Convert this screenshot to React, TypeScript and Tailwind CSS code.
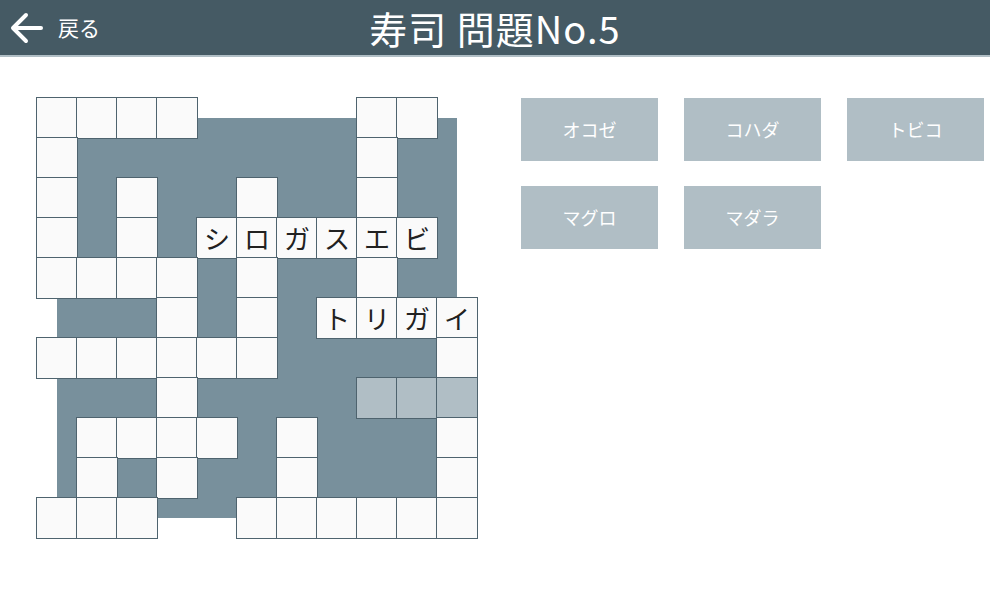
import React from 'react';

// 11x11 board: '.' = block, 'w' = empty square, 'h' = highlighted square, other = placed kana
const board: string[][] = [
  ['w', 'w', 'w', 'w', '.', '.', '.', '.', 'w', 'w', '.'],
  ['w', '.', '.', '.', '.', '.', '.', '.', 'w', '.', '.'],
  ['w', '.', 'w', '.', '.', 'w', '.', '.', 'w', '.', '.'],
  ['w', '.', 'w', '.', 'シ', 'ロ', 'ガ', 'ス', 'エ', 'ビ', '.'],
  ['w', 'w', 'w', 'w', '.', 'w', '.', '.', 'w', '.', '.'],
  ['.', '.', '.', 'w', '.', 'w', '.', 'ト', 'リ', 'ガ', 'イ'],
  ['w', 'w', 'w', 'w', 'w', 'w', '.', '.', '.', '.', 'w'],
  ['.', '.', '.', 'w', '.', '.', '.', '.', 'h', 'h', 'h'],
  ['.', 'w', 'w', 'w', 'w', '.', 'w', '.', '.', '.', 'w'],
  ['.', 'w', '.', 'w', '.', '.', 'w', '.', '.', '.', 'w'],
  ['w', 'w', 'w', '.', '.', 'w', 'w', 'w', 'w', 'w', 'w'],
];

const choices = ['オコゼ', 'コハダ', 'トビコ', 'マグロ', 'マダラ'];

const font = { fontFamily: '"Noto Sans CJK JP", "Noto Sans", sans-serif' };

const Cell: React.FC<{ value: string }> = ({ value }) => {
  if (value === '.') return <div className="w-10 h-10" />;
  const bg = value === 'h' ? 'bg-[#b0bec5]' : 'bg-[#fafafa]';
  const text = value === 'w' || value === 'h' ? '' : value;
  return (
    <div
      className={`w-10 h-10 ${bg} ring-1 ring-[#4e636e] flex items-center justify-center text-[26px] font-normal text-[#212121] leading-none`}
    >
      {text}
    </div>
  );
};

export default function App() {
  return (
    <div className="w-[990px] h-[614px] bg-white overflow-hidden" style={font}>
      <header className="h-[57px] bg-[#455a64] border-b-2 border-[#b0bec5] relative flex items-center justify-center">
        <button className="absolute left-[10px] top-0 h-full flex items-center gap-[14px] text-white">
          <svg width="34" height="34" viewBox="0 0 34 34" fill="none" stroke="currentColor" strokeWidth="4" strokeLinecap="round" strokeLinejoin="round">
            <path d="M31 17H4" />
            <path d="M16 4L3 17l13 13" />
          </svg>
          <span className="text-[21px] font-normal leading-none">戻る</span>
        </button>
        <h1 className="text-white text-[38px] font-normal leading-none tracking-[1px]">寿司 問題No.5</h1>
      </header>

      <main className="flex items-start pl-[37px] pt-[41px] gap-[44px]">
        <div className="relative w-[440px] h-[440px] shrink-0">
          <div className="absolute inset-[20px] bg-[#78909c]" />
          <div className="relative grid grid-cols-[repeat(11,40px)] grid-rows-[repeat(11,40px)]">
            {board.map((row, r) =>
              row.map((v, c) => <Cell key={`${r}-${c}`} value={v} />)
            )}
          </div>
        </div>

        <div className="flex flex-wrap w-[470px] gap-x-[26px] gap-y-[25px]">
          {choices.map((w) => (
            <div
              key={w}
              className="w-[137px] h-[63px] bg-[#b0bec5] flex items-center justify-center text-white text-[18px] font-normal"
            >
              {w}
            </div>
          ))}
        </div>
      </main>
    </div>
  );
}
